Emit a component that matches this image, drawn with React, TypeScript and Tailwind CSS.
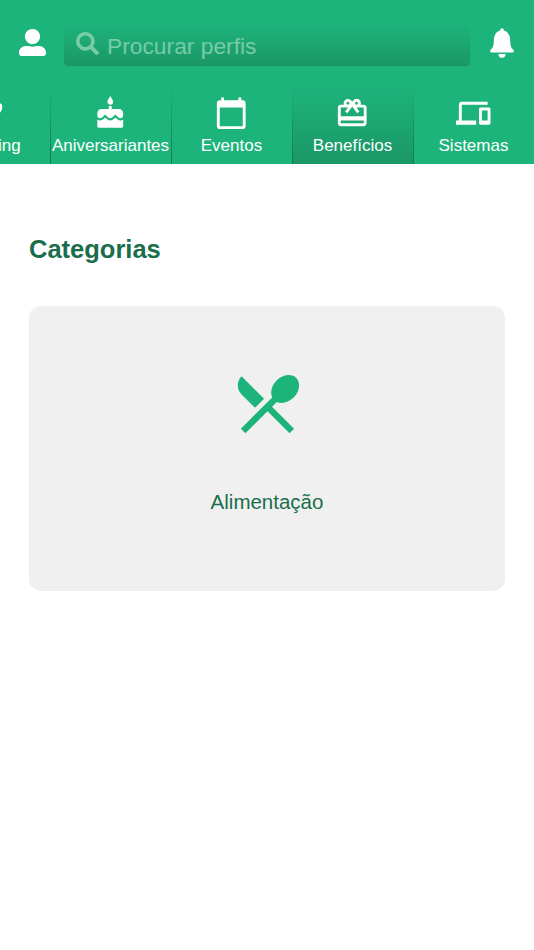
import React from "react";
import clsx from "clsx";
import type { IconType } from "react-icons";
import { FaSearch, FaUserAlt } from "react-icons/fa";
import { IoIosNotifications } from "react-icons/io";
import {
  MdCake,
  MdCalendarToday,
  MdDevices,
  MdEmojiEvents,
  MdRedeem,
  MdRestaurantMenu,
} from "react-icons/md";

interface Item {
  label: string;
  icon: IconType;
}

const tabs: Item[] = [
  { label: "Ranking", icon: MdEmojiEvents },
  { label: "Aniversariantes", icon: MdCake },
  { label: "Eventos", icon: MdCalendarToday },
  { label: "Benefícios", icon: MdRedeem },
  { label: "Sistemas", icon: MdDevices },
];

const categories: Item[] = [{ label: "Alimentação", icon: MdRestaurantMenu }];

const TopBar = () => (
  <div className="flex h-[85px] items-center pr-[13px] pl-[19px]">
    <button aria-label="Perfil" className="shrink-0">
      <FaUserAlt className="size-[27px]" />
    </button>
    <label className="mt-[3px] ml-[18px] flex h-[43px] flex-1 items-center rounded-sm bg-linear-to-b from-[#1db47c] to-[#1b9767] pl-3">
      <FaSearch className="mb-[2px] size-[23px] shrink-0 text-[#77cba9]" />
      <input
        type="text"
        placeholder="Procurar perfis"
        className="mt-[5px] ml-2 min-w-0 flex-1 bg-transparent text-[22.8px] placeholder:text-[#77cba9] focus:outline-none"
      />
    </label>
    <button aria-label="Notificações" className="ml-[13px] shrink-0">
      <IoIosNotifications className="size-[38px]" />
    </button>
  </div>
);

const TabBar = ({ active }: { active: string }) => (
  <nav className="-ml-[71px] flex h-[79px]">
    {tabs.map(({ label, icon: Icon }) => (
      <div key={label} className="flex w-[121px] shrink-0">
        <div className="z-10 w-px bg-linear-to-b from-[#1db47c] to-[#14764f]" />
        <button
          className={clsx(
            "-ml-px flex min-w-0 flex-1 flex-col items-center whitespace-nowrap pt-[10.5px]",
            label === active && "bg-linear-to-b from-[#1db47c] to-[#1b9767]"
          )}
        >
          <Icon className="size-[34.5px] shrink-0" />
          <span className="mt-1 text-[17px] leading-6">{label}</span>
        </button>
      </div>
    ))}
  </nav>
);

export default function App() {
  return (
    <div className="min-h-screen bg-white font-['Liberation_Sans',Arial,sans-serif]">
      <header className="h-[164px] overflow-hidden bg-[#1db47c] text-white">
        <TopBar />
        <TabBar active="Benefícios" />
      </header>

      <main className="px-[29px] pt-[67px]">
        <h1 className="text-[25.5px] leading-9 font-bold text-[#1a6e4b]">Categorias</h1>
        <div className="mt-[39px] grid gap-6">
          {categories.map(({ label, icon: Icon }) => (
            <button
              key={label}
              className="flex h-[285px] flex-col items-center rounded-xl bg-[#f0f0f0] pt-[59px]"
            >
              <Icon className="size-[77px] text-[#1db47c]" />
              <span className="mt-12 text-[20.5px] leading-6 text-[#1a6e4b]">{label}</span>
            </button>
          ))}
        </div>
      </main>
    </div>
  );
}
